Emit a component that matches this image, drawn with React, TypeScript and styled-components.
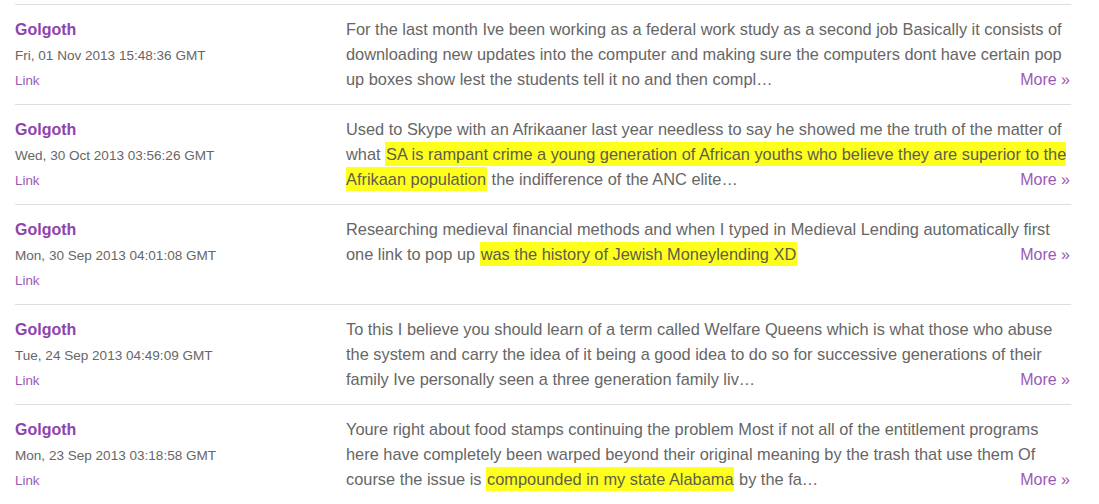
import React from 'react'
import styled, { createGlobalStyle } from 'styled-components'

type Part = { text: string; mark?: boolean }

type Post = {
    author: string
    date: string
    parts: Array<Part>
}

const posts: Array<Post> = [
    {
        author: 'Golgoth',
        date: 'Fri, 01 Nov 2013 15:48:36 GMT',
        parts: [
            {
                text: 'For the last month Ive been working as a federal work study as a second job Basically it consists of downloading new updates into the computer and making sure the computers dont have certain pop up boxes show lest the students tell it no and then compl\u2026',
            },
        ],
    },
    {
        author: 'Golgoth',
        date: 'Wed, 30 Oct 2013 03:56:26 GMT',
        parts: [
            {
                text: 'Used to Skype with an Afrikaaner last year needless to say he showed me the truth of the matter of what ',
            },
            {
                text: 'SA is rampant crime a young generation of African youths who believe they are superior to the Afrikaan population',
                mark: true,
            },
            { text: ' the indifference of the ANC elite\u2026' },
        ],
    },
    {
        author: 'Golgoth',
        date: 'Mon, 30 Sep 2013 04:01:08 GMT',
        parts: [
            {
                text: 'Researching medieval financial methods and when I typed in Medieval Lending automatically first one link to pop up ',
            },
            { text: 'was the history of Jewish Moneylending XD', mark: true },
        ],
    },
    {
        author: 'Golgoth',
        date: 'Tue, 24 Sep 2013 04:49:09 GMT',
        parts: [
            {
                text: 'To this I believe you should learn of a term called Welfare Queens which is what those who abuse the system and carry the idea of it being a good idea to do so for successive generations of their family Ive personally seen a three generation family liv\u2026',
            },
        ],
    },
    {
        author: 'Golgoth',
        date: 'Mon, 23 Sep 2013 03:18:58 GMT',
        parts: [
            {
                text: 'Youre right about food stamps continuing the problem Most if not all of the entitlement programs here have completely been warped beyond their original meaning by the trash that use them Of course the issue is ',
            },
            { text: 'compounded in my state Alabama', mark: true },
            { text: ' by the fa\u2026' },
        ],
    },
]

const GlobalStyle = createGlobalStyle`
    html, body {
        margin: 0;
        padding: 0;
        background: #ffffff;
        font-family: 'Liberation Sans', Arial, sans-serif;
    }
`

const Page = styled.div`
    padding: 4px 28px 0 15px;
    width: 1056px;
`

const Row = styled.div`
    display: flex;
    box-sizing: border-box;
    height: 100px;
    padding-top: 12px;
    border-top: 1px solid #dedede;
`

const Meta = styled.div`
    width: 331px;
    flex-shrink: 0;
    display: flex;
    flex-direction: column;
`

const Author = styled.a`
    font-size: 16px;
    font-weight: bold;
    line-height: 25px;
    color: #8e44ad;
    text-decoration: none;
`

const Date = styled.span`
    margin-top: 1px;
    font-size: 13.55px;
    line-height: 26px;
    color: #666666;
`

const SmallLink = styled.a`
    font-size: 13.4px;
    line-height: 24px;
    color: #9b59b6;
    text-decoration: none;
`

const Body = styled.p`
    margin: 0;
    width: 724px;
    font-size: 16.37px;
    line-height: 25px;
    color: #666666;
`

const Mark = styled.mark`
    background: #ffff1e;
    color: #5e5e4a;
    padding: 3px 1px;
`

const More = styled.a`
    float: right;
    font-size: 16px;
    color: #9b59b6;
    text-decoration: none;
`

const PostRow = ({ post }: { post: Post }) => (
    <Row>
        <Meta>
            <Author href="#">{post.author}</Author>
            <Date>{post.date}</Date>
            <SmallLink href="#">Link</SmallLink>
        </Meta>
        <Body>
            {post.parts.map((part, i) =>
                part.mark ? <Mark key={i}>{part.text}</Mark> : <span key={i}>{part.text}</span>
            )}
            <More href="#">More &raquo;</More>
        </Body>
    </Row>
)

const App = () => (
    <>
        <GlobalStyle />
        <Page>
            {posts.map((post, i) => (
                <PostRow key={i} post={post} />
            ))}
        </Page>
    </>
)

export default App
